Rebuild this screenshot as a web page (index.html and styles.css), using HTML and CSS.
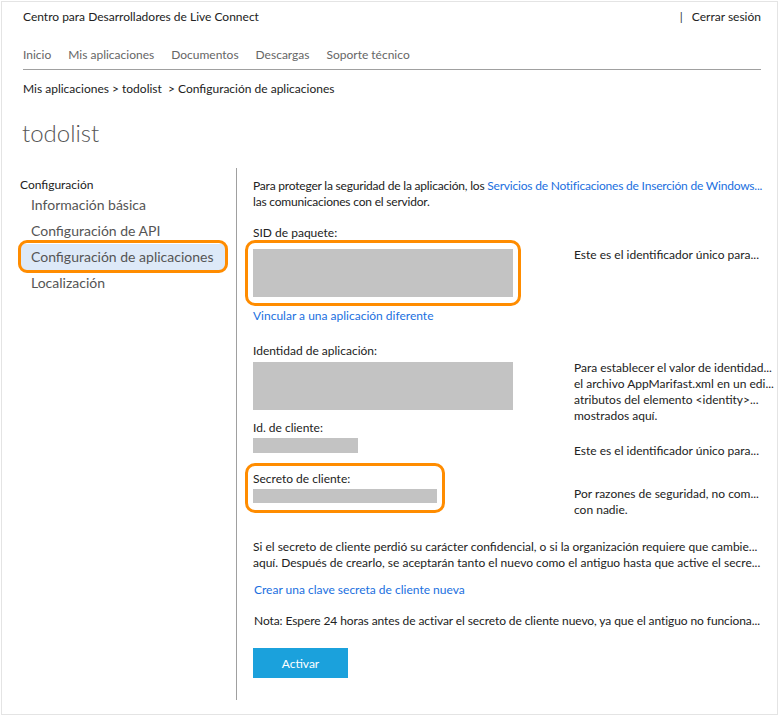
FILE: index.html
```html
<!DOCTYPE html>
<html lang="es">
<head>
<meta charset="utf-8">
<title>Configuración de aplicaciones</title>
<link rel="stylesheet" href="styles.css">
</head>
<body>
<div class="frame">
  <header class="topbar">
    <div class="brand">Centro para Desarrolladores de Live Connect</div>
    <div class="signout"><span class="sep">|</span>Cerrar sesión</div>
  </header>
  <nav class="nav">
    <a>Inicio</a><a>Mis aplicaciones</a><a>Documentos</a><a>Descargas</a><a>Soporte técnico</a>
  </nav>
  <div class="crumbs">Mis aplicaciones &gt; todolist &nbsp;&gt; Configuración de aplicaciones</div>
  <h1 class="title">todolist</h1>
  <div class="main">
    <aside class="side">
      <div class="side-head">Configuración</div>
      <div class="side-item">Información básica</div>
      <div class="side-item">Configuración de API</div>
      <div class="side-item active">Configuración de aplicaciones</div>
      <div class="side-item">Localización</div>
    </aside>
    <section class="content">
      <p class="intro">Para proteger la seguridad de la aplicación, los <a class="link">Servicios de Notificaciones de Inserción de Windows...</a><br>las comunicaciones con el servidor.</p>

      <div class="row r-sid">
        <div class="field hl hl-sid">
          <div class="label">SID de paquete:</div>
          <div class="mask m-sid"></div>
        </div>
        <div class="desc d-sid">Este es el identificador único para...</div>
      </div>
      <a class="link l-vinc">Vincular a una aplicación diferente</a>

      <div class="row r-ident">
        <div class="field">
          <div class="label">Identidad de aplicación:</div>
          <div class="mask m-ident"></div>
        </div>
        <div class="desc d-ident">Para establecer el valor de identidad...<br>el archivo AppMarifast.xml en un edi...<br>atributos del elemento &lt;identity&gt;...<br>mostrados aquí.</div>
      </div>

      <div class="row r-client">
        <div class="field">
          <div class="label">Id. de cliente:</div>
          <div class="mask m-client"></div>
        </div>
        <div class="desc d-client">Este es el identificador único para...</div>
      </div>

      <div class="row r-secret">
        <div class="field hl hl-secret">
          <div class="label">Secreto de cliente:</div>
          <div class="mask m-secret"></div>
        </div>
        <div class="desc d-secret">Por razones de seguridad, no com...<br>con nadie.</div>
      </div>

      <p class="para">Si el secreto de cliente perdió su carácter confidencial, o si la organización requiere que cambie...<br>aquí. Después de crearlo, se aceptarán tanto el nuevo como el antiguo hasta que active el secre...</p>
      <a class="link l-new">Crear una clave secreta de cliente nueva</a>
      <p class="note">Nota: Espere 24 horas antes de activar el secreto de cliente nuevo, ya que el antiguo no funciona...</p>
      <button class="btn">Activar</button>
    </section>
  </div>
</div>
</body>
</html>
```

FILE: styles.css
```css
*, *::before, *::after { box-sizing: border-box; }
html, body { margin: 0; padding: 0; background: #fff; }
body {
  font-family: "Lato", "Open Sans", sans-serif;
  font-size: 12px;
  color: #222;
}
.frame {
  margin: 1px;
  width: 777px;
  height: 714px;
  border: 1px solid #e4e4e4;
  padding: 0 16px 0 18px;
}
.topbar {
  display: flex;
  justify-content: space-between;
  align-items: center;
  height: 30px;
  padding-left: 3px;
  line-height: 16px;
}
.sep { margin-right: 9px; color: #333; }
.nav {
  display: flex;
  gap: 17px;
  margin-left: 3px;
  padding: 15px 0 6px;
  line-height: 16px;
  border-bottom: 1px solid #a0a0a0;
}
.nav a { color: #666; }
.crumbs {
  margin: 11px 0 0 3px;
  line-height: 16px;
  color: #222;
}
.title {
  margin: 21px 0 0 2px;
  font-weight: 300;
  font-size: 24px;
  line-height: 30px;
  color: #555;
}
.main {
  display: flex;
  margin-top: 20px;
}
.side {
  width: 216px;
  flex-shrink: 0;
  padding-top: 10px;
}
.side-head {
  line-height: 14px;
  color: #222;
}
.side-item {
  font-size: 14px;
  color: #555;
  line-height: 26px;
  padding-left: 11px;
  position: relative;
}
.side-item.active {
  background: #dde9f8;
  margin: 0 11px 0 1px;
  padding-left: 10px;
}
.side-item.active::after {
  content: "";
  position: absolute;
  left: -3px; right: -3px; top: -4px; bottom: -3px;
  border: 3px solid #ff8c00;
  border-radius: 9px;
}
.content {
  flex: 1;
  min-width: 0;
  height: 532px;
  border-left: 1px solid #a0a0a0;
  padding: 10px 0 0 16px;
  white-space: nowrap;
}
.intro { margin: 0; line-height: 16px; letter-spacing: -0.2px; }
.link { color: #1a6fe0; cursor: pointer; }
.row { display: flex; }
.field { width: 321px; flex-shrink: 0; position: relative; }
.label { line-height: 16px; }
.desc { line-height: 16px; min-width: 0; }
.mask { background: #c3c3c3; }
.m-sid { width: 260px; height: 48px; margin-top: 8px; }
.m-ident { width: 260px; height: 48px; margin-top: 3px; }
.m-client { width: 105px; height: 15px; margin-top: 2px; }
.m-secret { width: 184px; height: 14px; margin-top: 2px; }
.hl::after {
  content: "";
  position: absolute;
  border: 3px solid #ff8c00;
  border-radius: 10px;
}
.hl-sid::after { left: -8px; top: 15px; width: 276px; height: 66px; }
.hl-secret::after { left: -8px; top: -8px; width: 200px; height: 50px; }
.r-sid { margin-top: 15px; }
.d-sid { padding-top: 22px; }
.l-vinc { display: block; margin-top: 11px; line-height: 16px; }
.r-ident { margin-top: 19px; }
.d-ident { padding-top: 17px; margin-bottom: -14px; }
.r-client { margin-top: 10px; }
.d-client { padding-top: 23px; }
.r-secret { margin-top: 12px; }
.d-secret { padding-top: 15px; }
.para { margin: 21px 0 0; line-height: 16px; }
.l-new { display: block; margin: 11px 0 0 1px; line-height: 16px; }
.note { margin: 15px 0 0 1px; line-height: 16px; letter-spacing: -0.09px; }
.btn {
  display: block;
  margin-top: 19px;
  width: 95px;
  height: 30px;
  border: 0;
  background: #1ba1dc;
  color: #fff;
  font-family: inherit;
  font-size: 12px;
}
```
